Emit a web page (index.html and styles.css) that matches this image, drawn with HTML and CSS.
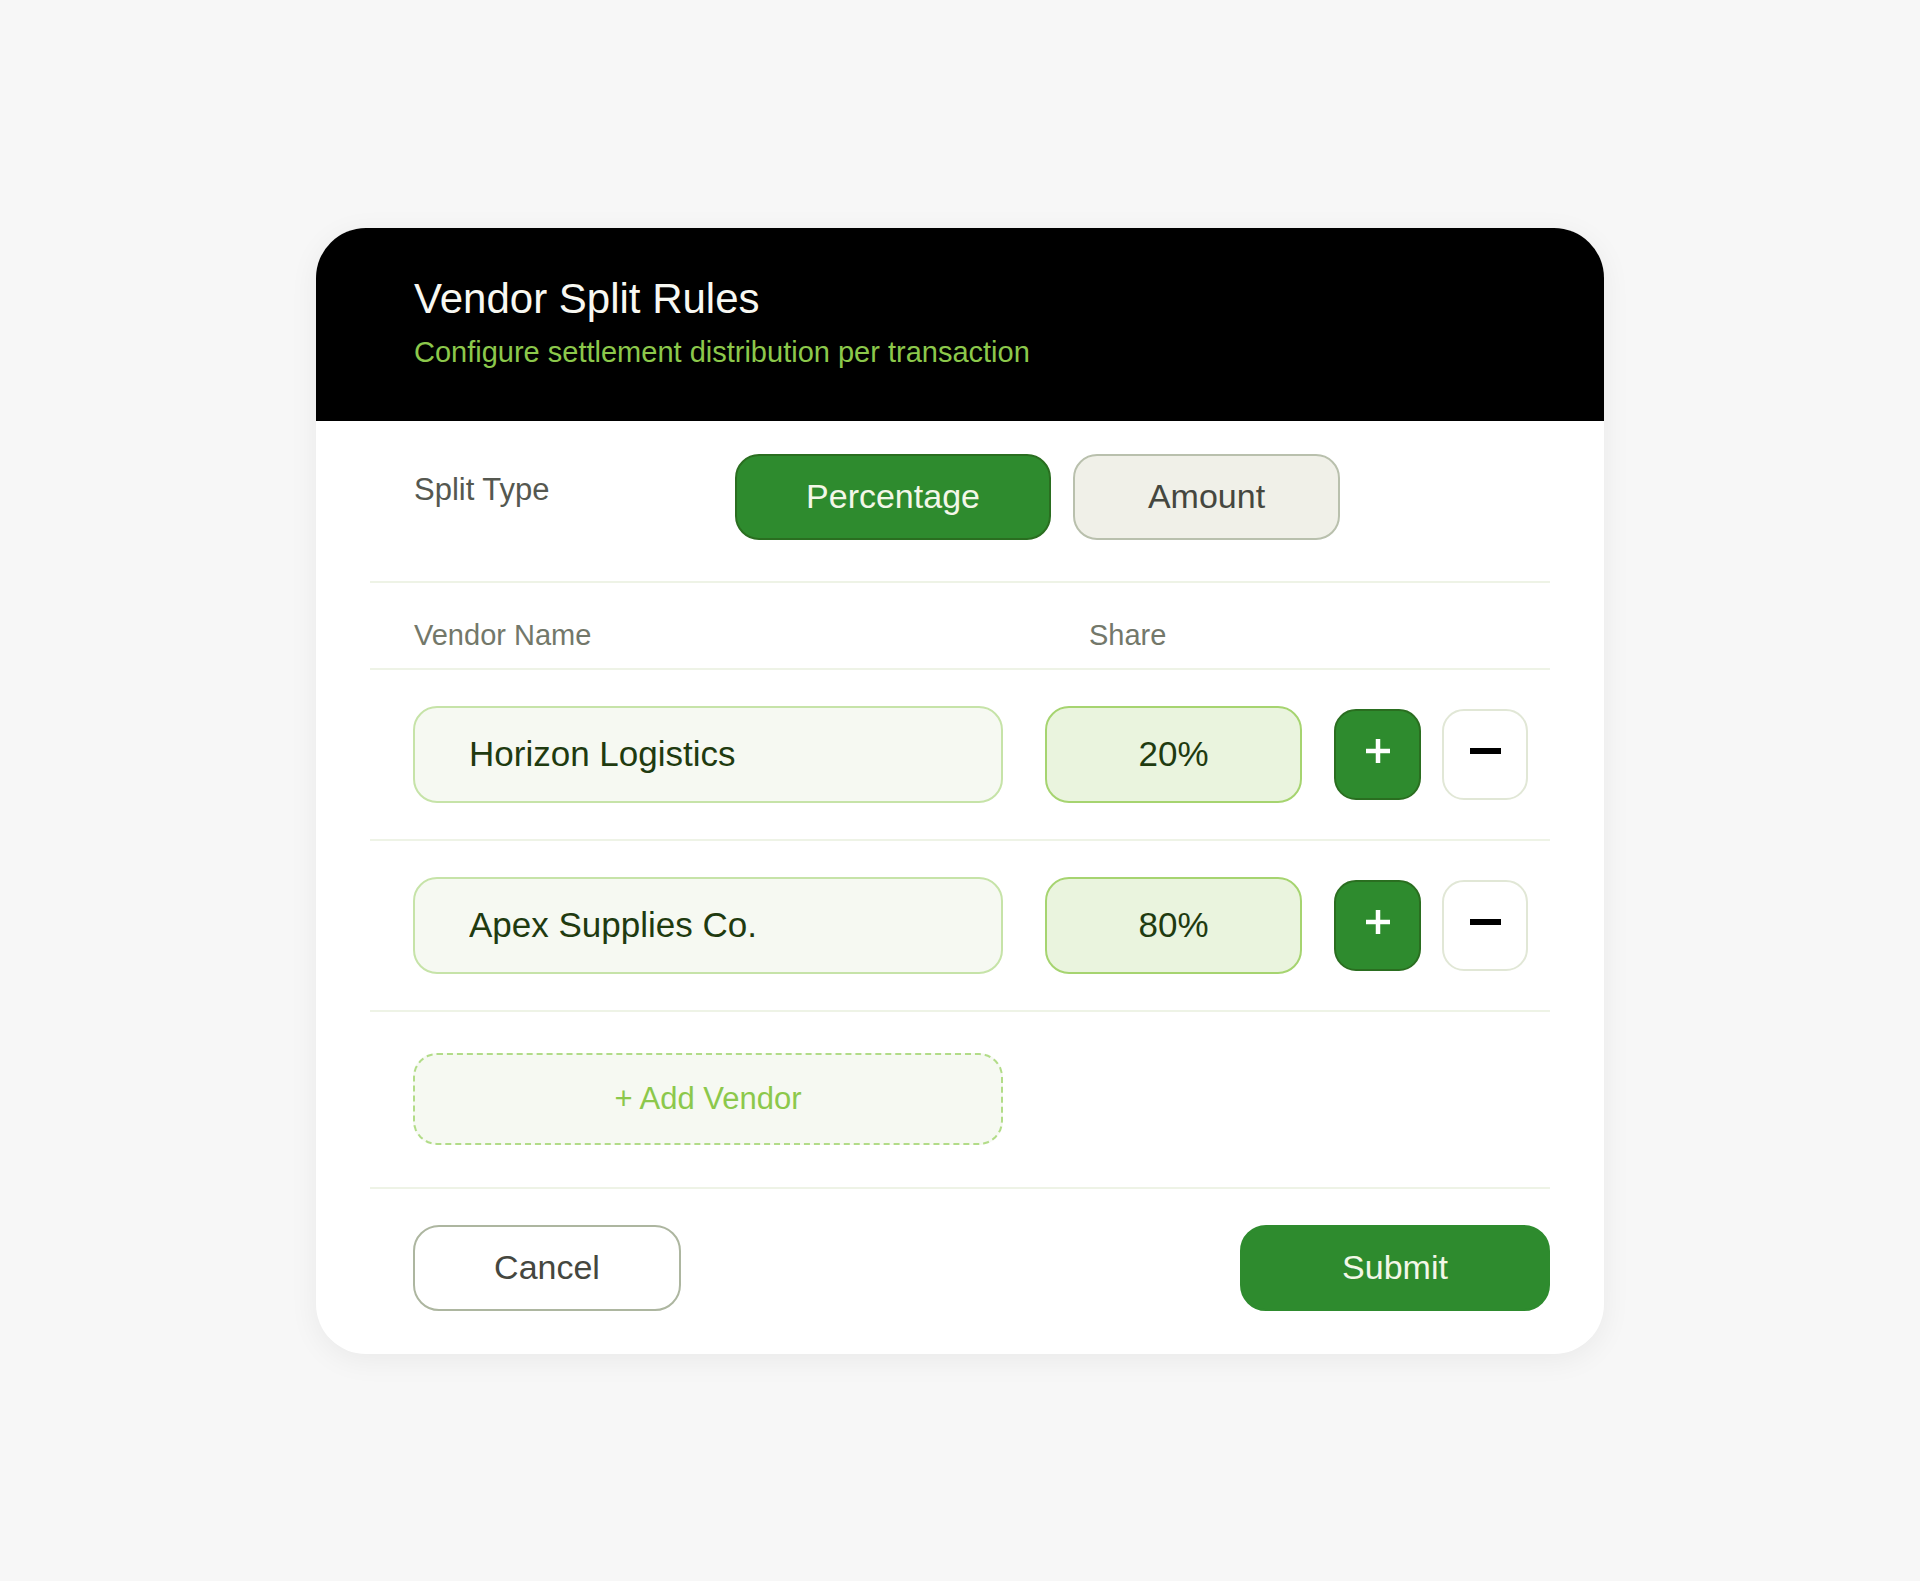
FILE: index.html
```html
<!DOCTYPE html>
<html lang="en">

<head>
    <meta charset="UTF-8">
    <meta name="viewport" content="width=device-width, initial-scale=1.0">
    <link rel="stylesheet" href="styles.css">
    <title>Vendor Split Rules</title>
</head>

<body>

    <div class="split-card">
        <header class="split-header">
            <h1>Vendor Split Rules</h1>
            <p>Configure settlement distribution per transaction</p>
        </header>

        <div class="split-body">
            <div class="split-type">
                <span class="split-label">Split Type</span>
                <button type="button" class="toggle active">Percentage</button>
                <button type="button" class="toggle">Amount</button>
            </div>

            <div class="col-head">
                <span class="col-name">Vendor Name</span>
                <span class="col-share">Share</span>
            </div>

            <div class="vendor-row">
                <input type="text" class="vendor-name" value="Horizon Logistics">
                <input type="text" class="vendor-share" value="20%">
                <button type="button" class="icon-btn add">
                    <svg width="28" height="28" viewBox="0 0 28 28"><path d="M14 2v24M2 14h24" stroke="#fff" stroke-width="4.5" /></svg>
                </button>
                <button type="button" class="icon-btn remove">
                    <svg width="31" height="6" viewBox="0 0 31 6"><path d="M0 3h31" stroke="#000" stroke-width="6" /></svg>
                </button>
            </div>

            <div class="vendor-row">
                <input type="text" class="vendor-name" value="Apex Supplies Co.">
                <input type="text" class="vendor-share" value="80%">
                <button type="button" class="icon-btn add">
                    <svg width="28" height="28" viewBox="0 0 28 28"><path d="M14 2v24M2 14h24" stroke="#fff" stroke-width="4.5" /></svg>
                </button>
                <button type="button" class="icon-btn remove">
                    <svg width="31" height="6" viewBox="0 0 31 6"><path d="M0 3h31" stroke="#000" stroke-width="6" /></svg>
                </button>
            </div>

            <div class="add-row">
                <button type="button" class="add-vendor">+ Add Vendor</button>
            </div>

            <div class="footer">
                <button type="button" class="cancel">Cancel</button>
                <button type="button" class="submit">Submit</button>
            </div>
        </div>
    </div>

</body>

</html>
```

FILE: styles.css
```css
body {
    font-family: 'Liberation Sans', Arial, Helvetica, sans-serif;
    margin: 0;
    padding: 0;
    min-height: 100vh;
    background-color: #f7f7f7;
    display: flex;
    align-items: center;
    justify-content: center;
}

button,
input {
    font-family: inherit;
    box-sizing: border-box;
    outline: none;
    cursor: pointer;
}

.split-card {
    width: 1288px;
    background-color: #fff;
    border-radius: 50px;
    overflow: hidden;
    box-shadow: 0 6px 30px rgba(0, 0, 0, 0.06);
}

.split-header {
    height: 193px;
    box-sizing: border-box;
    background-color: #000;
    padding: 46px 0 0 98px;
}

.split-header h1 {
    margin: 0;
    font-size: 42px;
    line-height: 50px;
    font-weight: normal;
    color: #f8f8f2;
}

.split-header p {
    margin: 11px 0 0;
    font-size: 29px;
    line-height: 35px;
    color: #8cc84b;
}

.split-body {
    padding: 0 54px;
}

.split-type {
    display: flex;
    align-items: center;
    gap: 22px;
    padding: 33px 0 41px 44px;
    border-bottom: 2px solid #eef3e6;
}

.split-label {
    width: 299px;
    font-size: 31px;
    color: #555850;
    margin-bottom: 13px;
}

.toggle {
    height: 86px;
    font-size: 34px;
    border-radius: 24px;
    border: 2px solid #b9c0ad;
    background-color: #f0f0e8;
    color: #45473f;
    width: 267px;
}

.toggle.active {
    width: 316px;
    background-color: #2e8b2e;
    border-color: #2a6e20;
    color: #f3f7e8;
}

.col-head {
    display: flex;
    height: 87px;
    box-sizing: border-box;
    padding-top: 35px;
    font-size: 29px;
    line-height: 35px;
    color: #73786a;
    border-bottom: 2px solid #eef3e6;
}

.col-name {
    width: 631px;
    padding-left: 44px;
}

.col-share {
    padding-left: 44px;
}

.vendor-row {
    display: flex;
    align-items: center;
    height: 169px;
    padding-left: 43px;
    border-bottom: 2px solid #eef3e6;
}

.vendor-row input {
    height: 97px;
    border-radius: 24px;
    font-size: 35px;
    color: #1f3b10;
    cursor: text;
}

.vendor-name {
    width: 590px;
    margin-right: 42px;
    padding: 0 0 0 54px;
    background-color: #f6f9f2;
    border: 2px solid #c6e3a8;
}

.vendor-share {
    width: 257px;
    margin-right: 32px;
    text-align: center;
    background-color: #eaf4de;
    border: 2px solid #a6d470;
}

.icon-btn {
    width: 87px;
    height: 91px;
    border-radius: 22px;
    display: flex;
    align-items: center;
    justify-content: center;
    padding: 0 0 6px;
}

.icon-btn.add {
    background-color: #2e8b2e;
    border: 2px solid #2a6e20;
    margin-right: 21px;
}

.icon-btn.remove {
    width: 86px;
    background-color: #fff;
    border: 2px solid #e1e7d6;
}

.add-row {
    height: 175px;
    display: flex;
    align-items: center;
    padding-left: 43px;
    border-bottom: 2px solid #eef3e6;
}

.add-vendor {
    width: 590px;
    height: 92px;
    border-radius: 24px;
    border: 2px dashed #b2dc88;
    background-color: #f6f9f2;
    color: #8cc84b;
    font-size: 31px;
}

.footer {
    display: flex;
    justify-content: space-between;
    padding: 36px 0 43px 43px;
}

.footer button {
    height: 86px;
    font-size: 34px;
    border-radius: 26px;
}

.cancel {
    width: 268px;
    background-color: #fff;
    border: 2px solid #adb6a0;
    color: #45473f;
}

.submit {
    width: 310px;
    background-color: #2e8b2e;
    border: 2px solid #2e8b2e;
    color: #f3f7e8;
}
```
